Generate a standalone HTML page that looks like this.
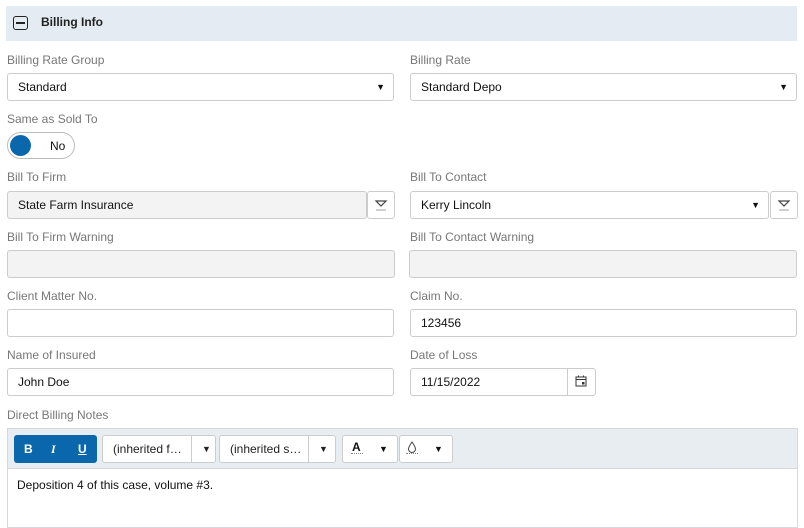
<!DOCTYPE html>
<html><head><style>
*{box-sizing:border-box;margin:0;padding:0}
body{width:804px;height:520px;overflow:hidden;background:#fff;font-family:"Liberation Sans",Arial,sans-serif;font-size:12px;color:#111;position:relative}
.a{position:absolute}
.lbl{position:absolute;color:#777;font-size:12px}
.f{position:absolute;border:1px solid #ccc;border-radius:3px;background:#fff;height:28px;line-height:26px;padding-left:10px;font-size:12px;color:#111}
.g{background:#f3f3f3}
.arr{position:absolute;right:8px;top:0;font-size:9px}
.btn{position:absolute;border:1px solid #ccc;border-radius:3px;background:#fff;height:28px}
.tb{position:absolute;border:1px solid #ccc;border-radius:3px;background:#fff;height:28px;top:435px;line-height:26px;font-size:12px}
</style></head><body>
<div class="a" style="left:6px;top:6px;width:791px;height:35px;background:#e4ebf2"></div>
<div class="a" style="left:13px;top:16px;width:15px;height:14px;border:1.5px solid #222;border-radius:3px"></div>
<div class="a" style="left:16px;top:22px;width:9px;height:2px;background:#222"></div>
<div class="a" style="left:41px;top:15px;font-weight:bold;font-size:12px;color:#222">Billing Info</div>

<div class="lbl" style="left:7px;top:53px">Billing Rate Group</div>
<div class="f" style="left:7px;top:73px;width:387px">Standard<span class="arr">▼</span></div>
<div class="lbl" style="left:410px;top:53px">Billing Rate</div>
<div class="f" style="left:410px;top:73px;width:387px">Standard Depo<span class="arr">▼</span></div>

<div class="lbl" style="left:7px;top:112px">Same as Sold To</div>
<div class="a" style="left:7px;top:132px;width:68px;height:27px;border:1px solid #bbb;border-radius:14px;background:#fff"></div>
<div class="a" style="left:10px;top:135px;width:21px;height:21px;border-radius:50%;background:#0a67ab"></div>
<div class="a" style="left:50px;top:139px;font-size:12px">No</div>

<div class="lbl" style="left:7px;top:170px">Bill To Firm</div>
<div class="f g" style="left:7px;top:191px;width:360px">State Farm Insurance</div>
<div class="btn" style="left:367px;top:191px;width:28px"><svg width="26" height="26" viewBox="0 0 26 26"><path d="M8 9h10l-5 5z" fill="none" stroke="#444" stroke-width="1.2"/><path d="M8.5 18h9" stroke="#444" stroke-dasharray="1 1"/></svg></div>
<div class="lbl" style="left:410px;top:170px">Bill To Contact</div>
<div class="f" style="left:410px;top:191px;width:359px">Kerry Lincoln<span class="arr">▼</span></div>
<div class="btn" style="left:770px;top:191px;width:28px"><svg width="26" height="26" viewBox="0 0 26 26"><path d="M8 9h10l-5 5z" fill="none" stroke="#444" stroke-width="1.2"/><path d="M8.5 18h9" stroke="#444" stroke-dasharray="1 1"/></svg></div>

<div class="lbl" style="left:7px;top:230px">Bill To Firm Warning</div>
<div class="f g" style="left:7px;top:250px;width:388px"></div>
<div class="lbl" style="left:410px;top:230px">Bill To Contact Warning</div>
<div class="f g" style="left:409px;top:250px;width:388px"></div>

<div class="lbl" style="left:7px;top:289px">Client Matter No.</div>
<div class="f" style="left:7px;top:309px;width:387px"></div>
<div class="lbl" style="left:410px;top:289px">Claim No.</div>
<div class="f" style="left:410px;top:309px;width:387px">123456</div>

<div class="lbl" style="left:7px;top:348px">Name of Insured</div>
<div class="f" style="left:7px;top:368px;width:387px">John Doe</div>
<div class="lbl" style="left:410px;top:348px">Date of Loss</div>
<div class="f" style="left:410px;top:368px;width:186px">11/15/2022</div>
<div class="a" style="left:567px;top:369px;width:1px;height:26px;background:#ccc"></div>
<svg class="a" style="left:574px;top:374px" width="14" height="14" viewBox="0 0 14 14"><rect x="2" y="3" width="10" height="9" fill="none" stroke="#333"/><path d="M2 5.5h10M4.5 1.5v2M9.5 1.5v2" stroke="#333"/><rect x="8" y="8" width="2.5" height="2.5" fill="#333"/></svg>

<div class="lbl" style="left:7px;top:408px">Direct Billing Notes</div>
<div class="a" style="left:7px;top:428px;width:791px;height:100px;border:1px solid #d5d9de;background:#fff"></div>
<div class="a" style="left:8px;top:429px;width:789px;height:40px;background:#e8edf2;border-bottom:1px solid #d5d9de"></div>
<div class="a" style="left:14px;top:435px;width:83px;height:28px;background:#0a67ab;border-radius:3px;color:#fff;font-weight:bold;font-size:12px;line-height:28px">
<span class="a" style="left:10px">B</span><span class="a" style="left:37px;font-style:italic;font-family:'Liberation Serif',serif">I</span><span class="a" style="left:64px;text-decoration:underline">U</span></div>
<div class="tb" style="left:102px;width:114px;padding-left:10px;color:#222">(inherited f…<span class="a" style="left:88px;top:0;width:1px;height:26px;background:#ccc"></span><span class="a" style="left:99px;font-size:9px">▼</span></div>
<div class="tb" style="left:219px;width:117px;padding-left:10px;color:#222">(inherited s…<span class="a" style="left:88px;top:0;width:1px;height:26px;background:#ccc"></span><span class="a" style="left:99px;font-size:9px">▼</span></div>
<div class="tb" style="left:342px;width:56px"><span class="a" style="left:9px;font-weight:bold;top:-2px">A</span><span class="a" style="left:8px;top:17px;width:12px;border-bottom:1px dotted #888"></span><span class="a" style="left:36px;font-size:9px">▼</span></div>
<div class="tb" style="left:399px;width:54px"><svg class="a" style="left:6px;top:5px" width="12" height="14" viewBox="0 0 12 14"><path d="M6 1C4 4 2.5 6 2.5 8a3.5 3.5 0 007 0C9.5 6 8 4 6 1z" fill="none" stroke="#444"/></svg><span class="a" style="left:6px;top:17px;width:12px;border-bottom:1px dotted #888"></span><span class="a" style="left:34px;font-size:9px">▼</span></div>
<div class="a" style="left:17px;top:478px;font-size:12px;color:#111">Deposition 4 of this case, volume #3.</div>
</body></html>
